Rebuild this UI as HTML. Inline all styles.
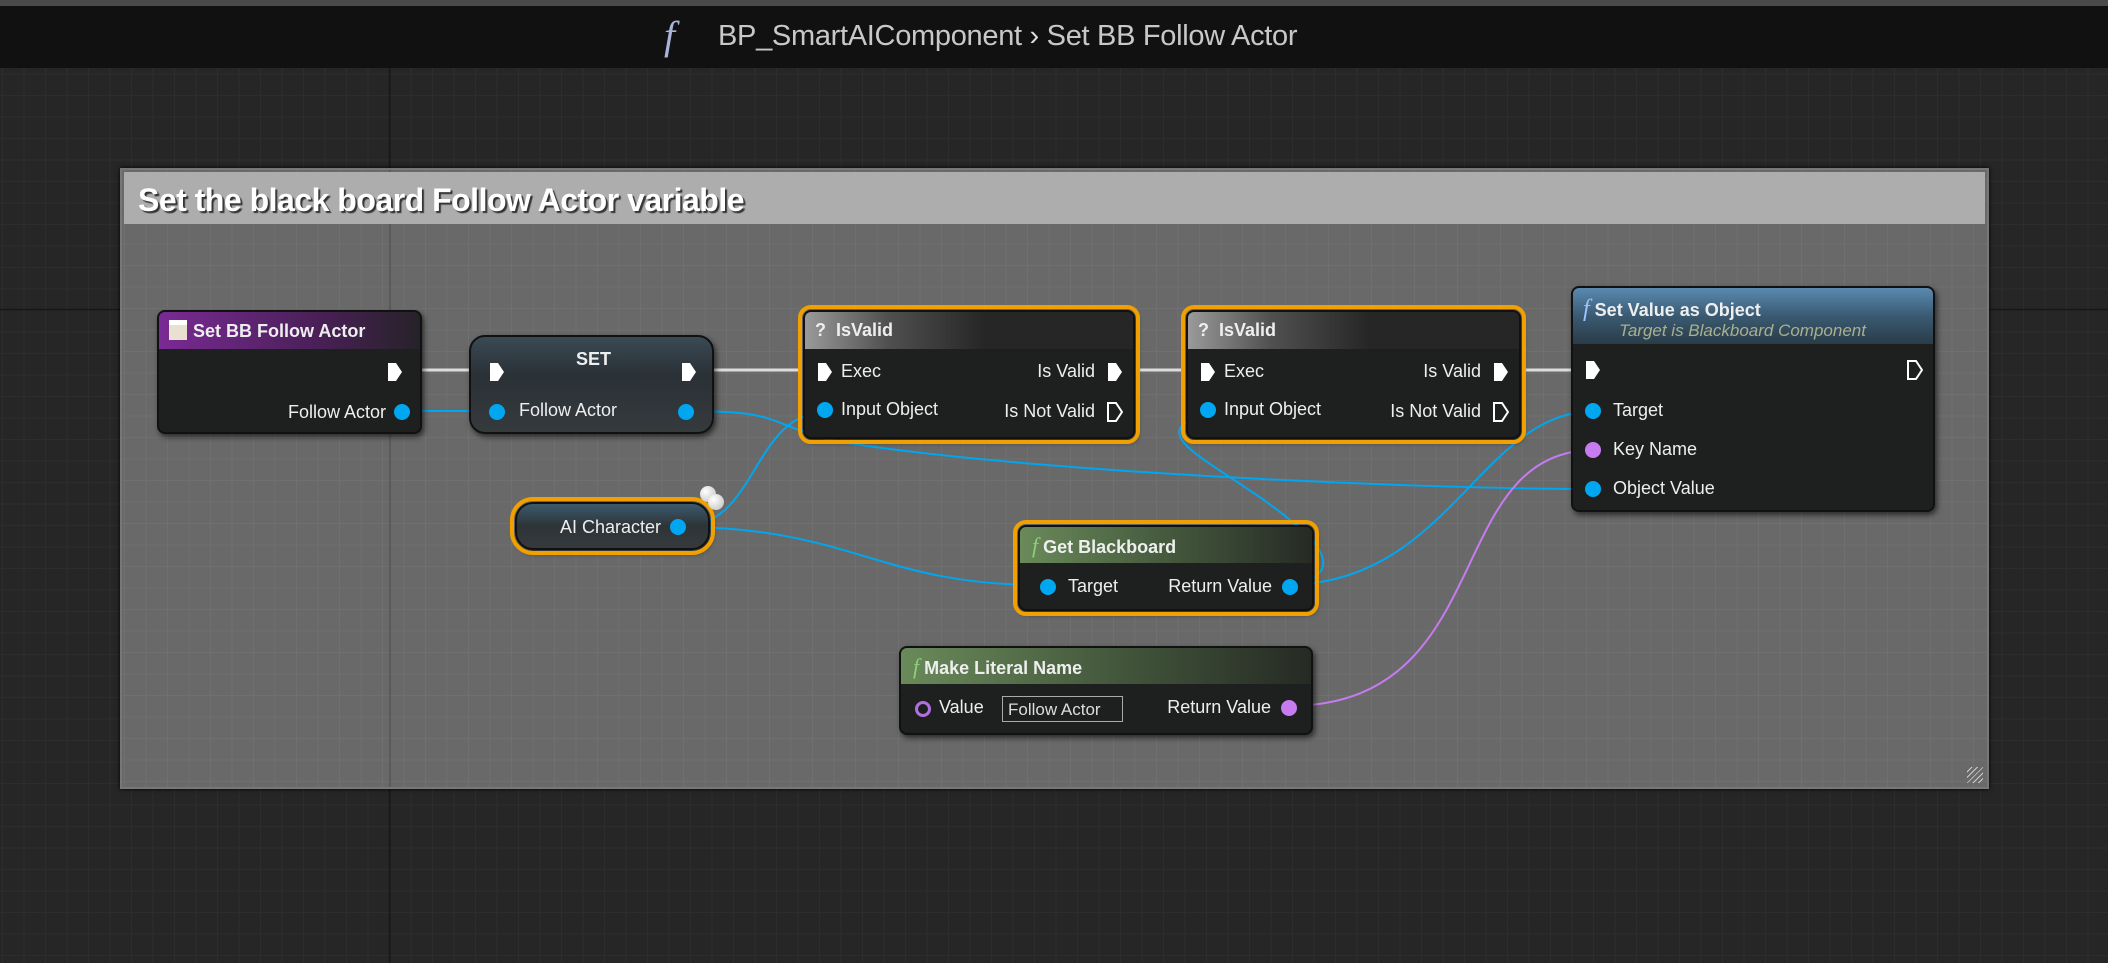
<!DOCTYPE html>
<html><head><meta charset="utf-8"><style>
*{box-sizing:border-box;margin:0;padding:0}
body{width:2108px;height:963px;overflow:hidden;position:relative;font-family:"Liberation Sans",sans-serif;color:#e8e8e8;
background-color:#262626;
background-image:linear-gradient(#141414 2px,transparent 2px),linear-gradient(90deg,#141414 2px,transparent 2px),linear-gradient(#2d2d2d 1px,transparent 1px),linear-gradient(90deg,#2d2d2d 1px,transparent 1px);
background-size:3000px 3000px,3000px 3000px,21.5px 21.5px,21.5px 21.5px;background-position:0 309px,389px 0,2px 9px,2px 9px}
.top{position:absolute;left:0;top:0;width:2108px;height:6px;background:#4a4a4a}
.bar{position:absolute;left:0;top:6px;width:2108px;height:62px;background:#111}
.crumb{position:absolute;top:20px;left:718px;font-size:29px;color:#c8c8c8;white-space:nowrap;letter-spacing:-0.3px}
.fi{position:absolute;left:664px;top:12px;font-family:"Liberation Serif",serif;font-style:italic;font-size:40px;color:#a8b4d8}
.comment{position:absolute;left:120px;top:168px;width:1869px;height:621px;background-color:#696969;
background-image:linear-gradient(90deg,#5a5a5a 2px,transparent 2px),linear-gradient(#707070 1px,transparent 1px),linear-gradient(90deg,#707070 1px,transparent 1px);
background-size:3000px 100%,21.5px 21.5px,21.5px 21.5px;background-position:267px 0,0 9px,2px 0;box-shadow:0 0 4px #000;border:2px solid #777}
.chead{position:absolute;left:2px;top:2px;right:2px;height:52px;background:#adadad;font-weight:bold;font-size:32px;color:#fff;padding:10px 14px;text-shadow:2px 2px 1px #333;letter-spacing:-0.5px}
.node{position:absolute;background:#1e201f;border-radius:8px;box-shadow:2px 3px 6px rgba(0,0,0,.6);border:2px solid #111}
.sel{outline:4px solid #f0a000;outline-offset:1px;border-radius:8px}
.hd{height:37px;border-radius:6px 6px 0 0;font-weight:bold;font-size:18px;padding:8px 10px;color:#eee;white-space:nowrap}
.t{position:absolute;font-size:18px;white-space:nowrap;color:#eee}
.pin{position:absolute;width:16px;height:16px;border-radius:50%;background:#00a6f0}
.pp{background:#c67bf0}
svg.w{position:absolute;left:0;top:0}
.node svg{position:absolute}
</style></head><body>
<div class="top"></div>
<div class="bar"></div>
<div class="fi">f</div>
<div class="crumb">BP_SmartAIComponent <span style="color:#ddd">›</span> Set BB Follow Actor</div>

<div class="comment"><div class="chead">Set the black board Follow Actor variable</div>
<div style="position:absolute;right:4px;bottom:4px;width:16px;height:16px;background:repeating-linear-gradient(135deg,transparent 0 3px,#ccc 3px 4px)"></div></div>

<svg class="w" width="2108" height="963">
<g fill="none" stroke-width="2">
<path d="M422 370H469M714 370H801M1137 370H1184M1523 370H1571" stroke="#ddd" stroke-width="3"/>
<path d="M398 411H495" stroke="#00a6f0"/>
<path d="M683 411C780 411 760 420 830 440 C1000 470 1400 489 1595 489" stroke="#00a6f0"/>
<path d="M680 527C760 527 750 411 830 411" stroke="#00a6f0"/>
<path d="M680 527C850 527 880 585 1040 585" stroke="#00a6f0"/>
<path d="M1285 585C1450 585 1480 411 1595 411" stroke="#00a6f0"/>
<path d="M1285 585C1340 580 1330 550 1290 520 C1230 470 1150 440 1190 420 C1200 414 1205 411 1215 411" stroke="#00a6f0"/>
<path d="M1288 706C1500 706 1440 450 1595 450" stroke="#c67bf0"/>
</g></svg>

<!-- Set BB Follow Actor -->
<div class="node" style="left:157px;top:310px;width:265px;height:124px">
<div class="hd" style="background:linear-gradient(90deg,#7a2a94,#4a2058 60%,#262228)"><span style="display:inline-block;width:18px;height:20px;background:#e8e0d0;vertical-align:-3px;margin-right:6px;border-top:5px solid #fff"></span>Set BB Follow Actor</div>
<svg style="left:228px;top:50px" width="16" height="20"><path d="M1 1H9L15 10L9 19H1Z" fill="#fff"/></svg>
<div class="t" style="right:34px;top:90px">Follow Actor</div>
<div class="pin" style="right:10px;top:92px"></div>
</div>

<!-- SET -->
<div class="node" style="left:469px;top:335px;width:245px;height:99px;border-radius:16px;background:linear-gradient(#3a4a55,#2a3136 40%,#353a3d)">
<div class="t" style="left:105px;top:12px;font-weight:bold">SET</div>
<svg style="left:18px;top:25px" width="16" height="20"><path d="M1 1H9L15 10L9 19H1Z" fill="#fff"/></svg>
<svg style="left:210px;top:25px" width="16" height="20"><path d="M1 1H9L15 10L9 19H1Z" fill="#fff"/></svg>
<div class="pin" style="left:18px;top:67px"></div>
<div class="t" style="left:48px;top:63px">Follow Actor</div>
<div class="pin" style="left:207px;top:67px"></div>
</div>

<!-- IsValid 1 -->
<div class="node sel" style="left:803px;top:310px;width:332px;height:129px">
<div class="hd" style="background:linear-gradient(90deg,#9a9a9a,#505050 25%,#262626 55%)">? &nbsp;IsValid</div>
<svg style="left:12px;top:50px" width="16" height="20"><path d="M1 1H9L15 10L9 19H1Z" fill="#fff"/></svg>
<div class="t" style="left:36px;top:49px">Exec</div>
<div class="t" style="right:38px;top:49px">Is Valid</div>
<svg style="left:302px;top:50px" width="16" height="20"><path d="M1 1H9L15 10L9 19H1Z" fill="#fff"/></svg>
<div class="pin" style="left:12px;top:90px"></div>
<div class="t" style="left:36px;top:87px">Input Object</div>
<div class="t" style="right:38px;top:89px">Is Not Valid</div>
<svg style="left:302px;top:90px" width="16" height="20"><path d="M1 1H9L15 10L9 19H1Z" fill="none" stroke="#fff" stroke-width="2"/></svg>
</div>

<!-- IsValid 2 -->
<div class="node sel" style="left:1186px;top:310px;width:335px;height:129px">
<div class="hd" style="background:linear-gradient(90deg,#9a9a9a,#505050 25%,#262626 55%)">? &nbsp;IsValid</div>
<svg style="left:12px;top:50px" width="16" height="20"><path d="M1 1H9L15 10L9 19H1Z" fill="#fff"/></svg>
<div class="t" style="left:36px;top:49px">Exec</div>
<div class="t" style="right:38px;top:49px">Is Valid</div>
<svg style="left:305px;top:50px" width="16" height="20"><path d="M1 1H9L15 10L9 19H1Z" fill="#fff"/></svg>
<div class="pin" style="left:12px;top:90px"></div>
<div class="t" style="left:36px;top:87px">Input Object</div>
<div class="t" style="right:38px;top:89px">Is Not Valid</div>
<svg style="left:305px;top:90px" width="16" height="20"><path d="M1 1H9L15 10L9 19H1Z" fill="none" stroke="#fff" stroke-width="2"/></svg>
</div>

<!-- Set Value as Object -->
<div class="node" style="left:1571px;top:286px;width:364px;height:226px">
<div class="hd" style="height:56px;background:linear-gradient(#5a8ab0,#3a5a72 50%,#2a3c48)"><span style="font-family:'Liberation Serif',serif;font-style:italic;color:#9cc4ff;font-size:24px;font-weight:normal">f</span> Set Value as Object
<div style="font-weight:normal;font-style:italic;font-size:17px;color:#a8b090;margin-left:36px;margin-top:-2px">Target is Blackboard Component</div></div>
<svg style="left:12px;top:72px" width="16" height="20"><path d="M1 1H9L15 10L9 19H1Z" fill="#fff"/></svg>
<svg style="left:334px;top:72px" width="16" height="20"><path d="M1 1H9L15 10L9 19H1Z" fill="none" stroke="#fff" stroke-width="2"/></svg>
<div class="pin" style="left:12px;top:115px"></div><div class="t" style="left:40px;top:112px">Target</div>
<div class="pin pp" style="left:12px;top:154px"></div><div class="t" style="left:40px;top:151px">Key Name</div>
<div class="pin" style="left:12px;top:193px"></div><div class="t" style="left:40px;top:190px">Object Value</div>
</div>

<!-- AI Character -->
<div class="node sel" style="left:515px;top:502px;width:195px;height:48px;border-radius:18px;outline-offset:1px;background:linear-gradient(#3c5a6c,#2d3438 50%,#353a3d)">
<div class="t" style="left:43px;top:13px">AI Character</div>
<div class="pin" style="left:153px;top:15px"></div>
</div>
<div style="position:absolute;left:700px;top:486px;width:16px;height:16px;border-radius:50%;background:radial-gradient(circle at 35% 35%,#fff,#bbb)"></div>
<div style="position:absolute;left:708px;top:494px;width:16px;height:16px;border-radius:50%;background:radial-gradient(circle at 35% 35%,#fff,#bbb)"></div>

<!-- Get Blackboard -->
<div class="node sel" style="left:1018px;top:525px;width:296px;height:86px">
<div class="hd" style="height:36px;padding:6px 12px;background:linear-gradient(90deg,#6a8a5a,#3e5038 60%,#262a24)"><span style="font-family:'Liberation Serif',serif;font-style:italic;color:#8ed07a;font-size:22px;font-weight:normal">f</span> Get Blackboard</div>
<div class="pin" style="left:20px;top:52px"></div><div class="t" style="left:48px;top:49px">Target</div>
<div class="t" style="right:40px;top:49px">Return Value</div><div class="pin" style="right:14px;top:52px"></div>
</div>

<!-- Make Literal Name -->
<div class="node" style="left:899px;top:646px;width:414px;height:89px">
<div class="hd" style="height:36px;padding:6px 12px;background:linear-gradient(90deg,#6a8a5a,#3e5038 60%,#262a24)"><span style="font-family:'Liberation Serif',serif;font-style:italic;color:#8ed07a;font-size:22px;font-weight:normal">f</span> Make Literal Name</div>
<div style="position:absolute;left:14px;top:53px;width:16px;height:16px;border-radius:50%;border:3px solid #b070e0"></div>
<div class="t" style="left:38px;top:49px">Value</div>
<div style="position:absolute;left:101px;top:48px;width:121px;height:26px;border:1px solid #aaa;font-size:17px;padding:3px 5px;color:#ddd;white-space:nowrap">Follow Actor</div>
<div class="t" style="right:40px;top:49px">Return Value</div><div class="pin pp" style="right:14px;top:52px"></div>
</div>
</body></html>
